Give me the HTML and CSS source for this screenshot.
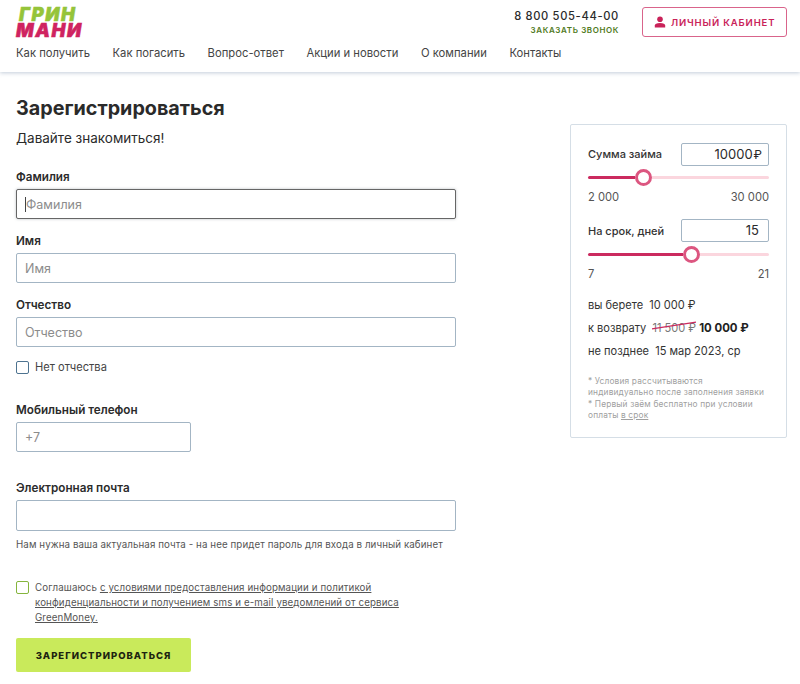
FILE: index.html
```html
<!DOCTYPE html>
<html lang="ru">
<head>
<meta charset="utf-8">
<title>Регистрация</title>
<link rel="stylesheet" href="styles.css">
</head>
<body>
<header class="header">
  <div class="header-top">
    <div class="logo"><span class="logo-green">ГРИН</span><span class="logo-red">МАНИ</span></div>
    <div class="header-right">
      <div class="phone-block">
        <div class="phone">8 800 505-44-00</div>
        <div class="callback">ЗАКАЗАТЬ ЗВОНОК</div>
      </div>
      <a class="cabinet">
        <svg class="cabinet-icon" viewBox="0 0 12 12"><circle cx="6" cy="3.2" r="2.8"/><path d="M0.8 11.5V9.6C0.8 8 2.6 7 6 7s5.2 1 5.2 2.6v1.9z"/></svg>
        ЛИЧНЫЙ КАБИНЕТ
      </a>
    </div>
  </div>
  <nav class="nav">
    <a>Как получить</a><a>Как погасить</a><a>Вопрос-ответ</a><a>Акции и новости</a><a>О компании</a><a>Контакты</a>
  </nav>
</header>
<main class="main">
  <section class="form">
    <h1 class="title">Зарегистрироваться</h1>
    <p class="subtitle">Давайте знакомиться!</p>
    <div class="field field-first">
      <label class="label">Фамилия</label>
      <div class="input focused"><span class="caret"></span><span class="ph">Фамилия</span></div>
    </div>
    <div class="field">
      <label class="label">Имя</label>
      <div class="input"><span class="ph">Имя</span></div>
    </div>
    <div class="field">
      <label class="label">Отчество</label>
      <div class="input"><span class="ph">Отчество</span></div>
    </div>
    <div class="check-row">
      <span class="box"></span><span class="check-text">Нет отчества</span>
    </div>
    <div class="field field-gap">
      <label class="label">Мобильный телефон</label>
      <div class="input short"><span class="ph">+7</span></div>
    </div>
    <div class="field field-gap">
      <label class="label">Электронная почта</label>
      <div class="input tall"></div>
    </div>
    <p class="hint">Нам нужна ваша актуальная почта - на нее придет пароль для входа в личный кабинет</p>
    <div class="agree">
      <span class="box green"></span>
      <p class="agree-text">Соглашаюсь <u>с условиями предоставления информации и политикой конфиденциальности и получением sms и e-mail уведомлений от сервиса GreenMoney.</u></p>
    </div>
    <button class="submit">ЗАРЕГИСТРИРОВАТЬСЯ</button>
  </section>
  <aside class="card">
    <div class="calc-row">
      <span class="calc-label">Сумма займа</span>
      <div class="calc-input">10000<span class="rub">₽</span></div>
    </div>
    <div class="slider"><div class="fill fill-sum"></div><span class="thumb"></span><div class="rest"></div></div>
    <div class="range"><span>2 000</span><span>30 000</span></div>
    <div class="calc-row second">
      <span class="calc-label days-label">На срок, дней</span>
      <div class="calc-input days">15</div>
    </div>
    <div class="slider slider-days"><div class="fill fill-days"></div><span class="thumb"></span><div class="rest"></div></div>
    <div class="range"><span>7</span><span>21</span></div>
    <p class="sum-line first">вы берете&nbsp; 10 000 ₽</p>
    <p class="sum-line">к возврату&nbsp; <span class="old">11 500 ₽<svg class="strike" viewBox="0 0 44 8" preserveAspectRatio="none"><path d="M0 7L44 1"/></svg></span> <b>10 000 ₽</b></p>
    <p class="sum-line">не позднее&nbsp; 15 мар 2023, ср</p>
    <p class="note">* Условия рассчитываются индивидуально после заполнения заявки<br>* Первый заём бесплатно при условии оплаты <u>в срок</u></p>
  </aside>
</main>
</body>
</html>
```
FILE: styles.css
```css
* { box-sizing: border-box; }
html, body { margin: 0; padding: 0; }
body {
  width: 800px;
  height: 684px;
  overflow: hidden;
  background: #fff;
  color: #2b2b2b;
  font-family: Inter, "Noto Sans", sans-serif;
}
p, h1 { margin: 0; }

.header {
  height: 72px;
  padding: 0 13px 0 16px;
  background: #fff;
  box-shadow: 0 1px 4px rgba(120, 145, 170, .45);
}
.header-top {
  display: flex;
  justify-content: space-between;
  height: 44px;
  padding-top: 6px;
}
.logo {
  display: flex;
  flex-direction: column;
  font-size: 18.5px;
  line-height: 16px;
  font-weight: 900;
  font-style: italic;
  letter-spacing: 1.6px;
  -webkit-text-stroke: .5px currentColor;
}
.logo-green { color: #95c43a; padding-left: 3px; }
.logo-red { color: #cf2360; }
.header-right { display: flex; gap: 23px; padding-top: 1px; }
.phone-block { text-align: right; padding-top: 1px; }
.phone {
  font-size: 11.2px;
  line-height: 16px;
  font-weight: 500;
  letter-spacing: .65px;
}
.callback {
  margin-top: 1px;
  font-size: 8px;
  line-height: 11px;
  font-weight: 600;
  letter-spacing: .6px;
  color: #4f7a22;
}
.cabinet {
  display: flex;
  align-items: center;
  gap: 5px;
  width: 145px;
  height: 30px;
  padding-left: 11px;
  border: 1px solid #d9648b;
  border-radius: 3px;
  color: #c92259;
  font-size: 9.5px;
  font-weight: 600;
  letter-spacing: .85px;
  white-space: nowrap;
}
.cabinet-icon { width: 12px; height: 12px; fill: #c92259; }
.nav {
  display: flex;
  gap: 22.6px;
  font-size: 11.25px;
  line-height: 18px;
  color: #444;
}

.main {
  display: flex;
  justify-content: space-between;
  padding: 0 13px 0 16px;
}
.form { width: 440px; padding-top: 24px; }
.title {
  font-size: 19.75px;
  line-height: 24px;
  font-weight: 700;
  color: #2a2a2a;
}
.subtitle {
  margin-top: 8px;
  font-size: 13.5px;
  line-height: 20px;
}
.field { margin-top: 11px; }
.field-first { margin-top: 18px; }
.field-gap { margin-top: 25px; }
.label {
  display: block;
  height: 20px;
  font-size: 11.7px;
  line-height: 22px;
  font-weight: 600;
}
.input {
  display: flex;
  align-items: center;
  height: 30px;
  padding-left: 8px;
  margin-top: 3px;
  border: 1px solid #a3b5c4;
  border-radius: 2px;
  font-size: 12.5px;
  background: #fff;
}
.input.focused {
  border-color: #666;
  box-shadow: 0 0 3px rgba(90, 100, 110, .4);
}
.caret { width: 1px; height: 15px; background: #444; }
.ph { color: #8c8c8c; }
.input.short { width: 175px; }
.input.tall { height: 31px; }
.check-row {
  display: flex;
  align-items: center;
  gap: 6px;
  margin-top: 13px;
  height: 14px;
}
.box {
  flex: none;
  width: 13px;
  height: 13px;
  border: 1.5px solid #4d7390;
  border-radius: 2px;
}
.box.green { border-color: #85b53c; }
.check-text {
  font-size: 11.1px;
  color: #444;
}
.hint {
  margin-top: 6px;
  font-size: 9.75px;
  line-height: 15px;
  letter-spacing: .08px;
  color: #555;
}
.agree {
  display: flex;
  gap: 6px;
  margin-top: 28px;
}
.agree .box { margin-top: 1px; }
.agree-text {
  width: 385px;
  font-size: 9.73px;
  line-height: 15px;
  letter-spacing: .12px;
  color: #555;
}
.submit {
  display: block;
  width: 175px;
  height: 34px;
  margin-top: 13px;
  padding: 0;
  border: 0;
  border-radius: 2px;
  background: #c9ea5b;
  color: #1d2410;
  font-family: inherit;
  font-size: 9.5px;
  font-weight: 800;
  letter-spacing: 1px;
}

.card {
  width: 217px;
  height: 314px;
  margin-top: 52px;
  padding: 18px 17px 0 17px;
  border: 1px solid #d5dee6;
  border-radius: 2px;
}
.calc-row {
  display: flex;
  align-items: center;
  justify-content: space-between;
}
.calc-row.second { margin-top: 14px; }
.calc-label { font-size: 11px; font-weight: 500; color: #333; padding-bottom: 2px; }
.calc-label.days-label { padding-bottom: 0; }
.calc-input {
  width: 88px;
  height: 23px;
  padding-right: 6px;
  border: 1px solid #a3b5c4;
  border-radius: 2px;
  font-size: 13px;
  line-height: 21px;
  text-align: right;
}
.rub { font-size: 12px; margin-left: 1px; }
.calc-input.days { padding-right: 9px; }
.slider {
  display: flex;
  align-items: center;
  height: 16px;
  margin-top: 3px;
}
.slider-days { margin-top: 4px; }
.fill { height: 3px; background: #cb2a5f; border-radius: 2px 0 0 2px; }
.fill-sum { width: 47px; }
.fill-days { width: 95px; }
.rest { flex: 1; height: 3px; background: #fbd6de; border-radius: 0 2px 2px 0; }
.thumb {
  flex: none;
  width: 17px;
  height: 17px;
  border: 3px solid #dc5680;
  border-radius: 50%;
  background: #fff;
}
.range {
  display: flex;
  justify-content: space-between;
  margin-top: 4px;
  font-size: 11.2px;
  line-height: 16px;
  color: #555;
}
.sum-line {
  margin-top: 7px;
  font-size: 11.05px;
  line-height: 16px;
  color: #333;
  white-space: nowrap;
}
.sum-line.first { margin-top: 15px; }
.old { position: relative; color: #777; }
.strike {
  position: absolute;
  left: 0;
  top: 0;
  width: 44px;
  height: 9px;
  overflow: visible;
}
.strike path { fill: none; stroke: #cb2a5f; stroke-width: 1.2; }
.sum-line b { font-size: 11.4px; font-weight: 700; color: #222; }
.note {
  margin-top: 17px;
  font-size: 8.35px;
  line-height: 11.3px;
  letter-spacing: .15px;
  color: #a0a0a0;
}
```
